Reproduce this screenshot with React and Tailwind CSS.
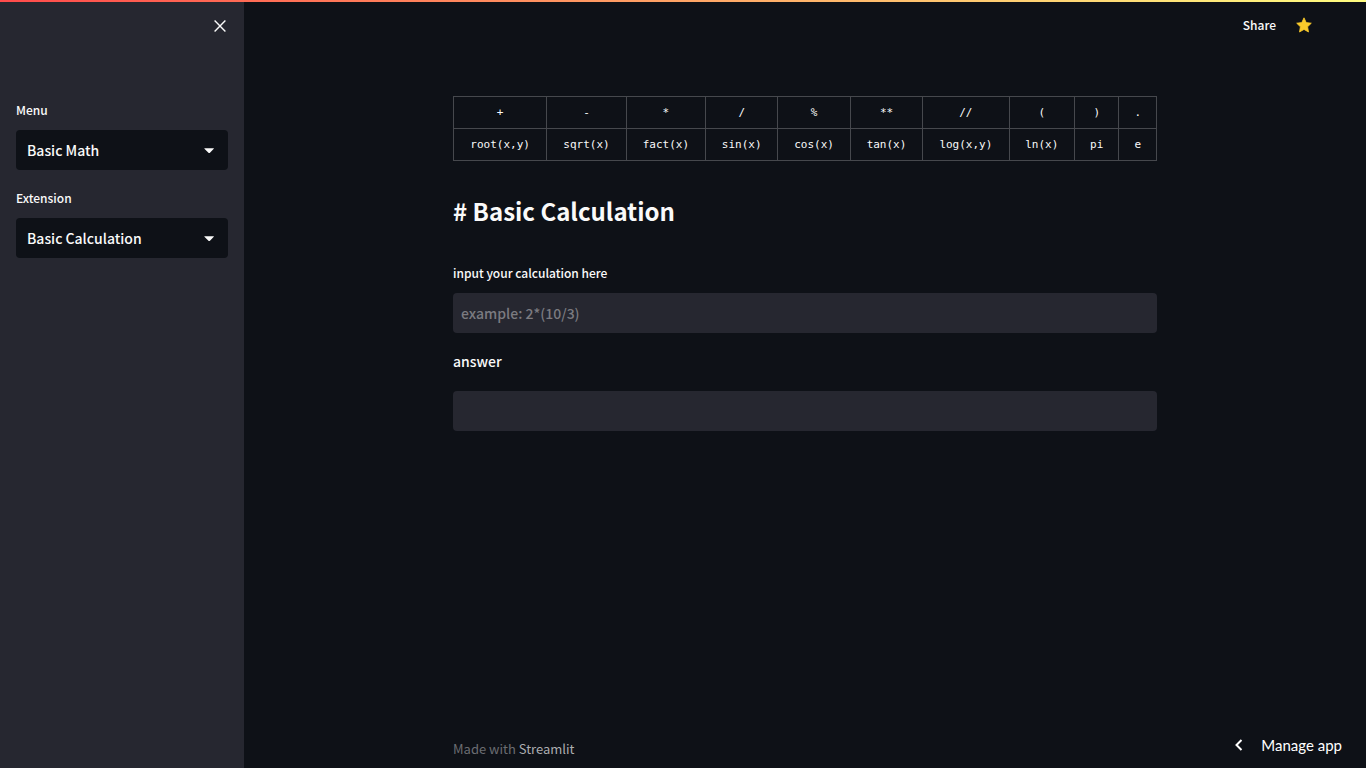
import { useState } from "react";

const KEYS = [
  ["+", "-", "*", "/", "%", "**", "//", "(", ")", "."],
  ["root(x,y)", "sqrt(x)", "fact(x)", "sin(x)", "cos(x)", "tan(x)", "log(x,y)", "ln(x)", "pi", "e"],
];

function SelectField({ id, label, options }) {
  const [value, setValue] = useState(options[0]);
  return (
    <div className="flex flex-col">
      <label htmlFor={id} className="mb-2.5 text-xs leading-5 font-medium">
        {label}
      </label>
      <div className="relative">
        <select
          id={id}
          value={value}
          onChange={(e) => setValue(e.target.value)}
          className="h-10 w-full appearance-none rounded bg-[#0e1117] pr-9 pl-[11px] text-sm font-medium text-[#fafafa] outline-none"
        >
          {options.map((o) => (
            <option key={o}>{o}</option>
          ))}
        </select>
        <svg
          className="pointer-events-none absolute top-2.5 right-2 size-5"
          viewBox="0 0 20 20"
          fill="#fafafa"
          aria-hidden="true"
        >
          <path d="M4.4 8.2h9.4v.6L10.2 12.5a1.4 1.4 0 0 1-2 0L4.4 8.8Z" />
        </svg>
      </div>
    </div>
  );
}

export default function App() {
  const [expression, setExpression] = useState("");
  return (
    <div className="relative flex min-h-screen bg-[#0e1117] font-['Noto_Sans_CJK_SC',sans-serif] text-[#fafafa]">
      <div className="absolute inset-x-0 top-0 z-10 h-0.5 bg-linear-to-r/srgb from-[#ff4b4b] to-[#fffd80]" />

      <aside className="flex w-[244px] shrink-0 flex-col bg-[#262730] px-4">
        <div className="flex h-[52px] items-center justify-end">
          <button type="button" aria-label="Close sidebar" className="size-4">
            <svg viewBox="0 0 16 16" fill="none" stroke="#fafafa" strokeWidth="1.4" aria-hidden="true">
              <path d="M2.6 2.6 13.4 13.4M13.4 2.6 2.6 13.4" />
            </svg>
          </button>
        </div>
        <div className="mt-12 flex flex-col gap-[18px]">
          <SelectField id="menu" label="Menu" options={["Basic Math"]} />
          <SelectField id="extension" label="Extension" options={["Basic Calculation"]} />
        </div>
      </aside>

      <div className="flex min-w-0 flex-1 flex-col">
        <header className="flex h-[50px] shrink-0 items-center justify-end gap-5 pr-[54px]">
          <button type="button" className="text-xs leading-5 font-medium">
            Share
          </button>
          <button type="button" aria-label="Favorite" className="size-4">
            <svg viewBox="0 0 16 16" fill="#faca2b" aria-hidden="true">
              <path d="M8 .8 10.2 5.6 15.3 6.2 11.6 9.8 12.5 15 8 12.4 3.5 15 4.4 9.8.7 6.2 5.8 5.6Z" stroke="#faca2b" strokeWidth=".8" strokeLinejoin="round" />
            </svg>
          </button>
        </header>

        <main className="mx-auto flex w-full max-w-[736px] flex-1 flex-col px-4 pt-[46px]">
          <table className="w-full border-collapse text-center font-['DejaVu_Sans_Mono',monospace] text-[11px] leading-[15px]">
            <tbody>
              {KEYS.map((row) => (
                <tr key={row[0]}>
                  {row.map((k) => (
                    <td key={k} className="border border-[#46484d] px-3.5 py-2">
                      {k}
                    </td>
                  ))}
                </tr>
              ))}
            </tbody>
          </table>

          <h1 className="mt-[30px] text-2xl leading-10 font-bold"># Basic Calculation</h1>

          <label htmlFor="expression" className="mt-8 text-xs leading-5 font-medium">
            input your calculation here
          </label>
          <input
            id="expression"
            value={expression}
            onChange={(e) => setExpression(e.target.value)}
            placeholder="example: 2*(10/3)"
            className="mt-2.5 h-10 w-full rounded bg-[#262730] px-2 text-sm font-medium outline-none placeholder:text-[#7b7b80]"
          />

          <label htmlFor="answer" className="mt-4 text-sm leading-6 font-medium">
            answer
          </label>
          <output id="answer" className="mt-[18px] block h-10 w-full rounded bg-[#262730]" />
        </main>

        <footer className="mx-auto w-full max-w-[736px] px-4 pb-[9px] text-[13px] leading-5 text-[#6b6d72]">
          Made with{" "}
          <a href="#streamlit" className="text-[#acadb0]">
            Streamlit
          </a>
        </footer>
      </div>

      <button
        type="button"
        className="absolute right-6 bottom-[13px] flex items-center gap-4 font-[Lato,sans-serif] text-[15px] leading-5 text-white"
      >
        <svg className="size-3" viewBox="0 0 12 12" fill="none" stroke="currentColor" strokeWidth="2" aria-hidden="true">
          <path d="M8.5 1 3.5 6l5 5" />
        </svg>
        Manage app
      </button>
    </div>
  );
}
